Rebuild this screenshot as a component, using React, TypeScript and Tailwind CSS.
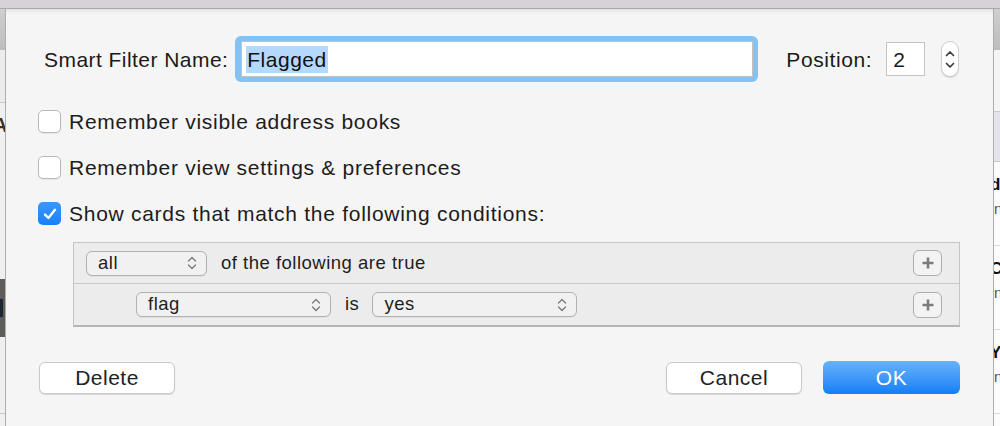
import React from "react";

const font = { fontFamily: '"Liberation Sans", Arial, sans-serif' };

function UpDown({ className = "" }: { className?: string }) {
  return (
    <svg width="10" height="16" viewBox="0 0 10 16" className={className} fill="none" stroke="#7a7a7a" strokeWidth="1.3" strokeLinecap="round" strokeLinejoin="round">
      <path d="M1.5 6 L5 2.5 L8.5 6" />
      <path d="M1.5 10 L5 13.5 L8.5 10" />
    </svg>
  );
}

function Popup({ label, width }: { label: string; width: string }) {
  return (
    <div className={`${width} h-[25px] flex items-center justify-between pl-[11px] pr-[9px] rounded-[6px] border border-[#b1b1b1] bg-[#f1f1f1] shadow-[0_1px_0_rgba(0,0,0,0.05)]`}>
      <span className="text-[18.5px] leading-none text-[#1e1e1e] tracking-[0.5px]">{label}</span>
      <UpDown />
    </div>
  );
}

function PlusBtn() {
  return (
    <div className="w-[29px] h-[26px] rounded-[6px] border border-[#adadad] bg-[#f3f3f3] flex items-center justify-center">
      <svg width="14" height="14" viewBox="0 0 14 14" stroke="#7d7d7d" strokeWidth="2.6" strokeLinecap="butt">
        <path d="M7 1.5 V12.5 M1.5 7 H12.5" />
      </svg>
    </div>
  );
}

function Checkbox({ checked }: { checked?: boolean }) {
  if (checked) {
    return (
      <div className="w-[23px] h-[23px] rounded-[5px] bg-gradient-to-b from-[#3b97fc] to-[#1580fa] flex items-center justify-center shrink-0">
        <svg width="16" height="16" viewBox="0 0 16 16" fill="none" stroke="white" strokeWidth="2.4" strokeLinecap="round" strokeLinejoin="round">
          <path d="M3 8.6 L6.4 12 L13 3.8" />
        </svg>
      </div>
    );
  }
  return <div className="w-[23px] h-[23px] rounded-[5px] border border-[#b9b9b9] bg-white shadow-[0_1px_1px_rgba(0,0,0,0.06)] shrink-0" />;
}

function CheckRow({ label, checked }: { label: string; checked?: boolean }) {
  return (
    <div className="flex items-center h-[23px] pl-[32px] gap-[8px]">
      <Checkbox checked={checked} />
      <span className="text-[21px] leading-none text-[#1c1c1c] tracking-[0.72px]">{label}</span>
    </div>
  );
}

function Button({ label, width, primary }: { label: string; width: string; primary?: boolean }) {
  if (primary) {
    return (
      <div className={`${width} h-[33px] rounded-[6px] bg-gradient-to-b from-[#66b2fb] to-[#0f7ef5] flex items-center justify-center`}>
        <span className="text-[21px] leading-none text-white tracking-[0.5px]">{label}</span>
      </div>
    );
  }
  return (
    <div className={`${width} h-[32px] rounded-[6px] bg-white border border-[#c9c9c9] shadow-[0_1px_1px_rgba(0,0,0,0.12)] flex items-center justify-center`}>
      <span className="text-[21px] leading-none text-[#222] tracking-[0.5px]">{label}</span>
    </div>
  );
}

export default function App() {
  return (
    <div className="w-[1000px] h-[426px] overflow-hidden flex flex-col bg-[#f5f5f5]" style={font}>
      <div className="h-[9px] bg-[#d6d3d6] border-b border-[#a9a9a9] shrink-0" />
      <div className="flex flex-1 min-h-0">
        {/* left background window */}
        <div className="w-[6px] flex flex-col bg-[#f0f0f0] border-r border-[#aeaeae] overflow-hidden">
          <div className="h-[41px] bg-gradient-to-b from-[#cfcfcf] to-[#bdbdbd]" />
          <div className="h-[53px] bg-[#ececec] border-b border-[#c9c9c9]" />
          <div className="h-[12px]" />
          <div className="h-[20px] text-[20px] leading-none text-[#3a3026] -ml-[7px] font-bold">A</div>
          <div className="h-[144px]" />
          <div className="h-[58px] bg-[#5d5d5b] flex items-center">
            <div className="w-[3px] h-[18px] bg-[#1d2530]" />
          </div>
          <div className="h-[77px] bg-[#efefef] border-b border-[#c8c8c8]" />
        </div>

        {/* dialog */}
        <div className="flex-1 flex flex-col bg-[#f5f5f5] shadow-[inset_0_5px_5px_-4px_rgba(0,0,0,0.12)]">
          {/* name row */}
          <div className="flex items-center mt-[27px] h-[46px] pl-[38px]">
            <span className="text-[21px] leading-none text-[#1a1a1a] tracking-[0.45px]">Smart Filter Name:</span>
            <div className="ml-[7px] w-[523px] h-[46px] rounded-[6px] bg-[#84c2f3] p-[5px] pl-[6px]">
              <div className="w-full h-full bg-white border border-[#c2c2c2] flex items-center pl-[4px]">
                <span className="bg-[#b4d8fe] text-[21px] leading-[27px] h-[27px] px-[1px] text-[#111] tracking-[0.5px]">Flagged</span>
              </div>
            </div>
            <span className="ml-[28px] text-[21px] leading-none text-[#1a1a1a] tracking-[0.6px]">Position:</span>
            <div className="ml-[14px] w-[39px] h-[34px] bg-white border border-[#c4c4c4] flex items-center pl-[6px]">
              <span className="text-[21px] leading-none text-[#1a1a1a]">2</span>
            </div>
            <div className="ml-[16px] w-[18px] h-[36px] rounded-[9px] bg-white border border-[#cfcfcf] shadow-[0_1px_1px_rgba(0,0,0,0.15)] flex flex-col items-center justify-center gap-[5px]">
              <svg width="10" height="7" viewBox="0 0 10 7" fill="none" stroke="#3a3a3a" strokeWidth="1.7" strokeLinecap="round" strokeLinejoin="round">
                <path d="M1.5 5.5 L5 2 L8.5 5.5" />
              </svg>
              <svg width="10" height="7" viewBox="0 0 10 7" fill="none" stroke="#3a3a3a" strokeWidth="1.7" strokeLinecap="round" strokeLinejoin="round">
                <path d="M1.5 1.5 L5 5 L8.5 1.5" />
              </svg>
            </div>
          </div>

          {/* checkboxes */}
          <div className="flex flex-col gap-[23px] mt-[28px]">
            <CheckRow label="Remember visible address books" />
            <CheckRow label="Remember view settings & preferences" />
            <CheckRow label="Show cards that match the following conditions:" checked />
          </div>

          {/* rule editor */}
          <div className="mt-[17px] ml-[67px] mr-[33px] border border-[#c4c4c4] border-b-2 border-b-[#b5b5b5] bg-[#ececec]">
            <div className="h-[41px] flex items-center pl-[12px] pr-[17px] border-b border-[#c9c9c9]">
              <Popup label="all" width="w-[121px]" />
              <span className="ml-[14px] text-[18.5px] leading-none text-[#1e1e1e] tracking-[0.5px]">of the following are true</span>
              <div className="flex-1" />
              <PlusBtn />
            </div>
            <div className="h-[41px] flex items-center pl-[62px] pr-[17px]">
              <Popup label="flag" width="w-[195px]" />
              <span className="ml-[14px] text-[18.5px] leading-none text-[#1e1e1e] tracking-[0.5px]">is</span>
              <div className="ml-[13px]">
                <Popup label="yes" width="w-[205px]" />
              </div>
              <div className="flex-1" />
              <PlusBtn />
            </div>
          </div>

          {/* buttons */}
          <div className="mt-[34px] flex items-center pl-[33px] pr-[33px]">
            <Button label="Delete" width="w-[136px]" />
            <div className="flex-1" />
            <Button label="Cancel" width="w-[136px]" />
            <div className="ml-[21px]">
              <Button label="OK" width="w-[137px]" primary />
            </div>
          </div>
        </div>

        {/* right background window */}
        <div className="w-[7px] flex flex-col bg-[#fbfbfb] border-l border-[#aeaeae] overflow-hidden">
          <div className="h-[41px] bg-gradient-to-b from-[#cfcfcf] to-[#bdbdbd]" />
          <div className="h-[62px] bg-[#f4f4f4] border-b border-[#c9c9c9]" />
          <div className="h-[50px] bg-[#e4e4ea] border-b border-[#c9c9c9]" />
          {[0, 1, 2].map((i) => (
            <div key={i} className="h-[84px] border-b border-[#dcdcdc] flex flex-col pt-[14px] gap-[8px]">
              <span className="text-[17px] leading-none text-[#111] font-bold -ml-[4px]">{i === 0 ? "d" : i === 1 ? "C" : "Y"}</span>
              <span className="text-[15px] leading-none text-[#555]">n</span>
            </div>
          ))}
        </div>
      </div>
    </div>
  );
}
